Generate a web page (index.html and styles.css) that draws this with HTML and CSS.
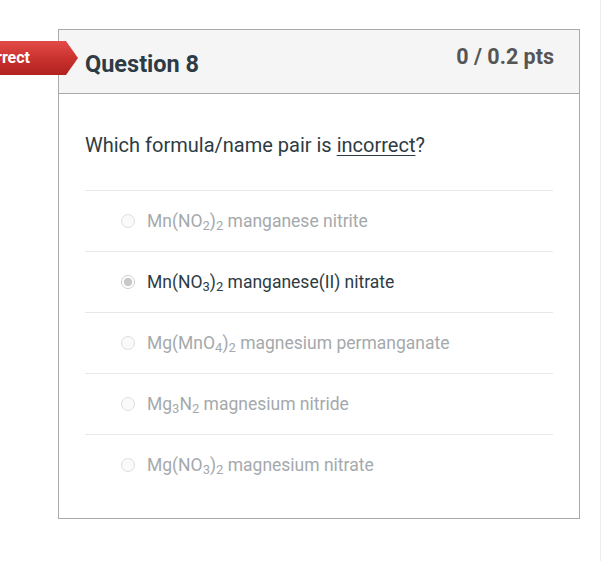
FILE: index.html
```html
<!DOCTYPE html>
<html>
<head>
<meta charset="utf-8">
<link rel="stylesheet" href="styles.css">
</head>
<body>
<div class="page">
  <div class="card">
    <div class="badge"><span class="badge-text">Incorrect</span></div>
    <div class="header">
      <h2 class="title">Question 8</h2>
      <div class="pts">0 / 0.2 pts</div>
    </div>
    <div class="body">
      <p class="question">Which formula/name pair is <u>incorrect</u>?</p>
      <div class="answers">
        <div class="answer"><span class="radio"></span><span class="label">Mn(NO<sub>2</sub>)<sub>2</sub> manganese nitrite</span></div>
        <div class="answer selected"><span class="radio"></span><span class="label">Mn(NO<sub>3</sub>)<sub>2</sub> manganese(II) nitrate</span></div>
        <div class="answer"><span class="radio"></span><span class="label">Mg(MnO<sub>4</sub>)<sub>2</sub> magnesium permanganate</span></div>
        <div class="answer"><span class="radio"></span><span class="label">Mg<sub>3</sub>N<sub>2</sub> magnesium nitride</span></div>
        <div class="answer"><span class="radio"></span><span class="label">Mg(NO<sub>3</sub>)<sub>2</sub> magnesium nitrate</span></div>
      </div>
    </div>
  </div>
</div>
</body>
</html>
```

FILE: styles.css
```css
html, body {
  margin: 0;
  padding: 0;
  background: #fff;
  font-family: Roboto, "Liberation Sans", sans-serif;
  color: #2d3b45;
}
.page {
  padding: 29px 0 0 58px;
  height: 561px;
  box-sizing: border-box;
  border-right: 1px solid #eee;
  width: 601px;
}
.card {
  position: relative;
  border: 1px solid #aaa;
  box-sizing: border-box;
  width: 522px;
}
.badge {
  position: absolute;
  left: -69px;
  top: 11px;
  width: 88px;
  height: 34px;
  box-sizing: border-box;
  padding-right: 48px;
  display: flex;
  justify-content: flex-end;
  align-items: center;
  font-size: 16px;
  font-weight: 700;
  color: #fff;
  white-space: nowrap;
  overflow: hidden;
  background: linear-gradient(#e24b48, #c8302d 55%, #b02220);
  clip-path: polygon(0 0, 76px 0, 88px 50%, 76px 100%, 0 100%);
}
.badge-text {
  flex: none;
  line-height: 20px;
  margin-top: -1px;
}
.header {
  display: flex;
  justify-content: space-between;
  align-items: flex-start;
  background: #f5f5f5;
  border-bottom: 1px solid #aaa;
  height: 63px;
  padding: 0 25px 0 26px;
}
.title {
  margin: 19px 0 0;
  font-size: 23.5px;
  font-weight: 700;
  line-height: 30px;
  color: #2d3b45;
}
.pts {
  margin-top: 13px;
  font-size: 21.5px;
  font-weight: 700;
  line-height: 28px;
  color: #555;
}
.body {
  padding: 0 26px 0 26px;
  height: 424px;
}
.question {
  margin: 0;
  padding-top: 37px;
  font-size: 20px;
  line-height: 28px;
  height: 59px;
  color: #2d3b45;
}
.question u {
  text-decoration-thickness: 1px;
  text-underline-offset: 3px;
}
.answer {
  display: flex;
  align-items: center;
  height: 60px;
  border-top: 1px solid #e8e8e8;
  padding-left: 36px;
  font-size: 17.5px;
  color: #a5a9ac;
}
.answer.selected {
  color: #2d3b45;
}
.radio {
  width: 14px;
  height: 14px;
  border: 1px solid #dedede;
  border-radius: 50%;
  box-sizing: border-box;
  background: #fafafa;
  margin-right: 12px;
  flex: none;
}
.selected .radio {
  border: 1px solid #cfcfcf;
  background: radial-gradient(circle, #c8c8c8 0 3.8px, #fff 4.6px);
}
sub {
  font-size: 13px;
  vertical-align: -3px;
  line-height: 0;
}
```
